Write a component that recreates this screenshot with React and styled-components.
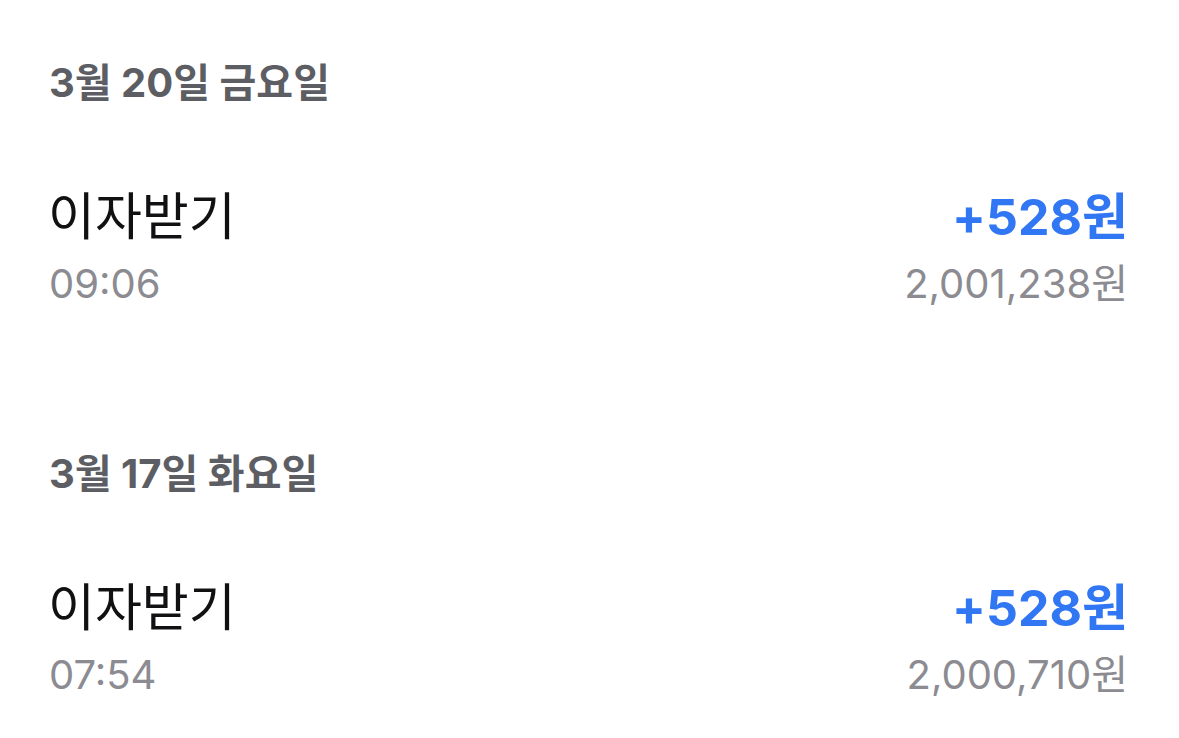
import styled, { createGlobalStyle } from "styled-components"

const GlobalStyle = createGlobalStyle`
  html, body {
    margin: 0;
    padding: 0;
    background: #ffffff;
  }
  body {
    font-family: Inter, "Noto Sans CJK KR", sans-serif;
    -webkit-font-smoothing: antialiased;
  }
`

const history = [
  {
    date: "3월 20일 금요일",
    items: [{ title: "이자받기", time: "09:06", amount: "+528원", balance: "2,001,238원" }],
  },
  {
    date: "3월 17일 화요일",
    items: [{ title: "이자받기", time: "07:54", amount: "+528원", balance: "2,000,710원" }],
  },
]

const App = () => {
  return (
    <>
      <GlobalStyle />
      <Page>
        {history.map((day) => (
          <Section key={day.date}>
            <DateHeader>{day.date}</DateHeader>
            {day.items.map((item) => (
              <Row key={item.time}>
                <Left>
                  <Title>{item.title}</Title>
                  <Sub>{item.time}</Sub>
                </Left>
                <Right>
                  <Amount>{item.amount}</Amount>
                  <Sub>{item.balance}</Sub>
                </Right>
              </Row>
            ))}
          </Section>
        ))}
      </Page>
    </>
  )
}

export default App

const Page = styled.div`
  width: 1179px;
  height: 738px;
  box-sizing: border-box;
  padding: 61px 51px 0 48px;
  display: flex;
  flex-direction: column;
  gap: 146px;
  overflow: hidden;
`

const Section = styled.section`
  display: flex;
  flex-direction: column;
  gap: 84px;
`

const DateHeader = styled.h3`
  margin: 0;
  font-size: 40px;
  line-height: 44px;
  font-weight: 700;
  color: #5d5e64;
  padding-left: 1px;
`

const Row = styled.div`
  display: flex;
  justify-content: space-between;
  align-items: flex-start;
`

const Left = styled.div`
  display: flex;
  flex-direction: column;
  gap: 17px;
`

const Right = styled(Left)`
  align-items: flex-end;
`

const Title = styled.div`
  font-size: 51px;
  line-height: 56px;
  font-weight: 400;
  color: #111113;
`

const Amount = styled.div`
  font-size: 50px;
  line-height: 56px;
  font-weight: 700;
  color: #3176f2;
`

const Sub = styled.div`
  font-size: 40px;
  line-height: 44px;
  color: #8b8b91;
  padding-left: 1px;
`
